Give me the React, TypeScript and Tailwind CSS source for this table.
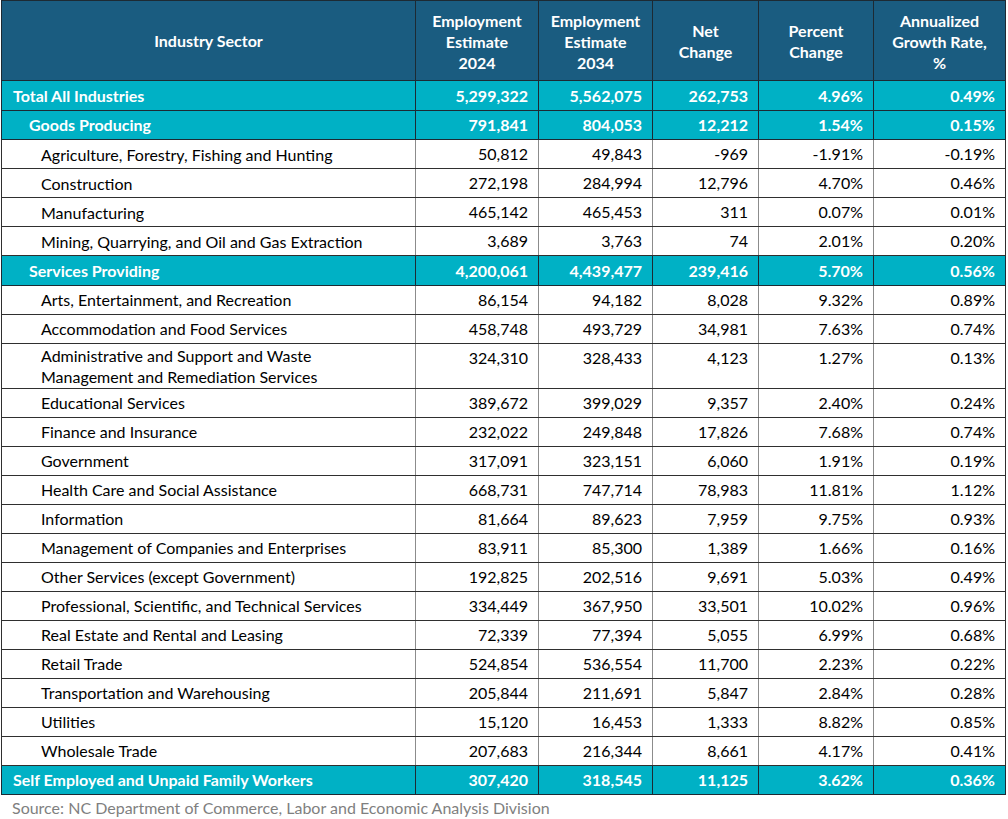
import React from "react";

type Row = {
  name: string;
  level: 0 | 1 | 2;
  v: [string, string, string, string, string];
};

const rows: Row[] = [
  { name: "Total All Industries", level: 0, v: ["5,299,322", "5,562,075", "262,753", "4.96%", "0.49%"] },
  { name: "Goods Producing", level: 1, v: ["791,841", "804,053", "12,212", "1.54%", "0.15%"] },
  { name: "Agriculture, Forestry, Fishing and Hunting", level: 2, v: ["50,812", "49,843", "-969", "-1.91%", "-0.19%"] },
  { name: "Construction", level: 2, v: ["272,198", "284,994", "12,796", "4.70%", "0.46%"] },
  { name: "Manufacturing", level: 2, v: ["465,142", "465,453", "311", "0.07%", "0.01%"] },
  { name: "Mining, Quarrying, and Oil and Gas Extraction", level: 2, v: ["3,689", "3,763", "74", "2.01%", "0.20%"] },
  { name: "Services Providing", level: 1, v: ["4,200,061", "4,439,477", "239,416", "5.70%", "0.56%"] },
  { name: "Arts, Entertainment, and Recreation", level: 2, v: ["86,154", "94,182", "8,028", "9.32%", "0.89%"] },
  { name: "Accommodation and Food Services", level: 2, v: ["458,748", "493,729", "34,981", "7.63%", "0.74%"] },
  { name: "Administrative and Support and Waste Management and Remediation Services", level: 2, v: ["324,310", "328,433", "4,123", "1.27%", "0.13%"] },
  { name: "Educational Services", level: 2, v: ["389,672", "399,029", "9,357", "2.40%", "0.24%"] },
  { name: "Finance and Insurance", level: 2, v: ["232,022", "249,848", "17,826", "7.68%", "0.74%"] },
  { name: "Government", level: 2, v: ["317,091", "323,151", "6,060", "1.91%", "0.19%"] },
  { name: "Health Care and Social Assistance", level: 2, v: ["668,731", "747,714", "78,983", "11.81%", "1.12%"] },
  { name: "Information", level: 2, v: ["81,664", "89,623", "7,959", "9.75%", "0.93%"] },
  { name: "Management of Companies and Enterprises", level: 2, v: ["83,911", "85,300", "1,389", "1.66%", "0.16%"] },
  { name: "Other Services (except Government)", level: 2, v: ["192,825", "202,516", "9,691", "5.03%", "0.49%"] },
  { name: "Professional, Scientific, and Technical Services", level: 2, v: ["334,449", "367,950", "33,501", "10.02%", "0.96%"] },
  { name: "Real Estate and Rental and Leasing", level: 2, v: ["72,339", "77,394", "5,055", "6.99%", "0.68%"] },
  { name: "Retail Trade", level: 2, v: ["524,854", "536,554", "11,700", "2.23%", "0.22%"] },
  { name: "Transportation and Warehousing", level: 2, v: ["205,844", "211,691", "5,847", "2.84%", "0.28%"] },
  { name: "Utilities", level: 2, v: ["15,120", "16,453", "1,333", "8.82%", "0.85%"] },
  { name: "Wholesale Trade", level: 2, v: ["207,683", "216,344", "8,661", "4.17%", "0.41%"] },
  { name: "Self Employed and Unpaid Family Workers", level: 0, v: ["307,420", "318,545", "11,125", "3.62%", "0.36%"] },
];

const headers = [
  ["Employment", "Estimate", "2024"],
  ["Employment", "Estimate", "2034"],
  ["Net", "Change"],
  ["Percent", "Change"],
  ["Annualized", "Growth Rate,", "%"],
];

const widths = ["w-[414px]", "w-[123px]", "w-[114px]", "w-[106px]", "w-[115px]", "w-[132px]"];

export default function App() {
  return (
    <div className="w-[1008px] h-[819px] bg-white font-['Lato','Open_Sans',sans-serif] text-[16px]">
      <table className="table-fixed border-collapse w-[1005px] ml-px">
        <colgroup>
          {widths.map((w, i) => (
            <col key={i} className={w} />
          ))}
        </colgroup>
        <thead>
          <tr className="h-[80px] bg-[#1a5c80] text-white font-bold leading-[21px]">
            <th className="border border-[#1d2a33] text-center">Industry Sector</th>
            {headers.map((h, i) => (
              <th key={i} className="border border-[#1d2a33] text-center pt-px">
                {h.map((l) => (
                  <div key={l}>{l}</div>
                ))}
              </th>
            ))}
          </tr>
        </thead>
        <tbody>
          {rows.map((r) => {
            const teal = r.level < 2;
            const tall = r.name.length > 60;
            const cell = teal
              ? "border border-[#1d2a33] bg-[#00b1c5] text-white font-bold"
              : "border-y border-x border-y-[#2f2f2f] border-x-[#8c8c8c] text-black";
            return (
              <tr
                key={r.name}
                className={`${tall ? "h-[45px]" : teal ? "h-[29.5px]" : "h-[29px]"} leading-[21px]`}
              >
                <td
                  className={`${cell} text-left ${tall ? "align-top pt-[1px]" : "align-middle"} ${
                    r.level === 0 ? "pl-[11px]" : r.level === 1 ? "pl-[27px]" : "pl-[39px] pr-2"
                  } ${r.level === 2 ? "border-l-[#2f2f2f]" : ""}`}
                >
                  {r.name}
                </td>
                {r.v.map((v, i) => (
                  <td
                    key={i}
                    className={`${cell} text-right pr-[10px] ${teal ? "align-middle" : "align-top pt-[3px]"} ${
                      i === 4 && !teal ? "border-r-[#2f2f2f]" : ""
                    }`}
                  >
                    {v}
                  </td>
                ))}
              </tr>
            );
          })}
        </tbody>
      </table>
      <div className="pl-[12px] pt-[2px] text-[#7f7f7f] text-[16px] leading-[21px]">
        Source: NC Department of Commerce, Labor and Economic Analysis Division
      </div>
    </div>
  );
}
